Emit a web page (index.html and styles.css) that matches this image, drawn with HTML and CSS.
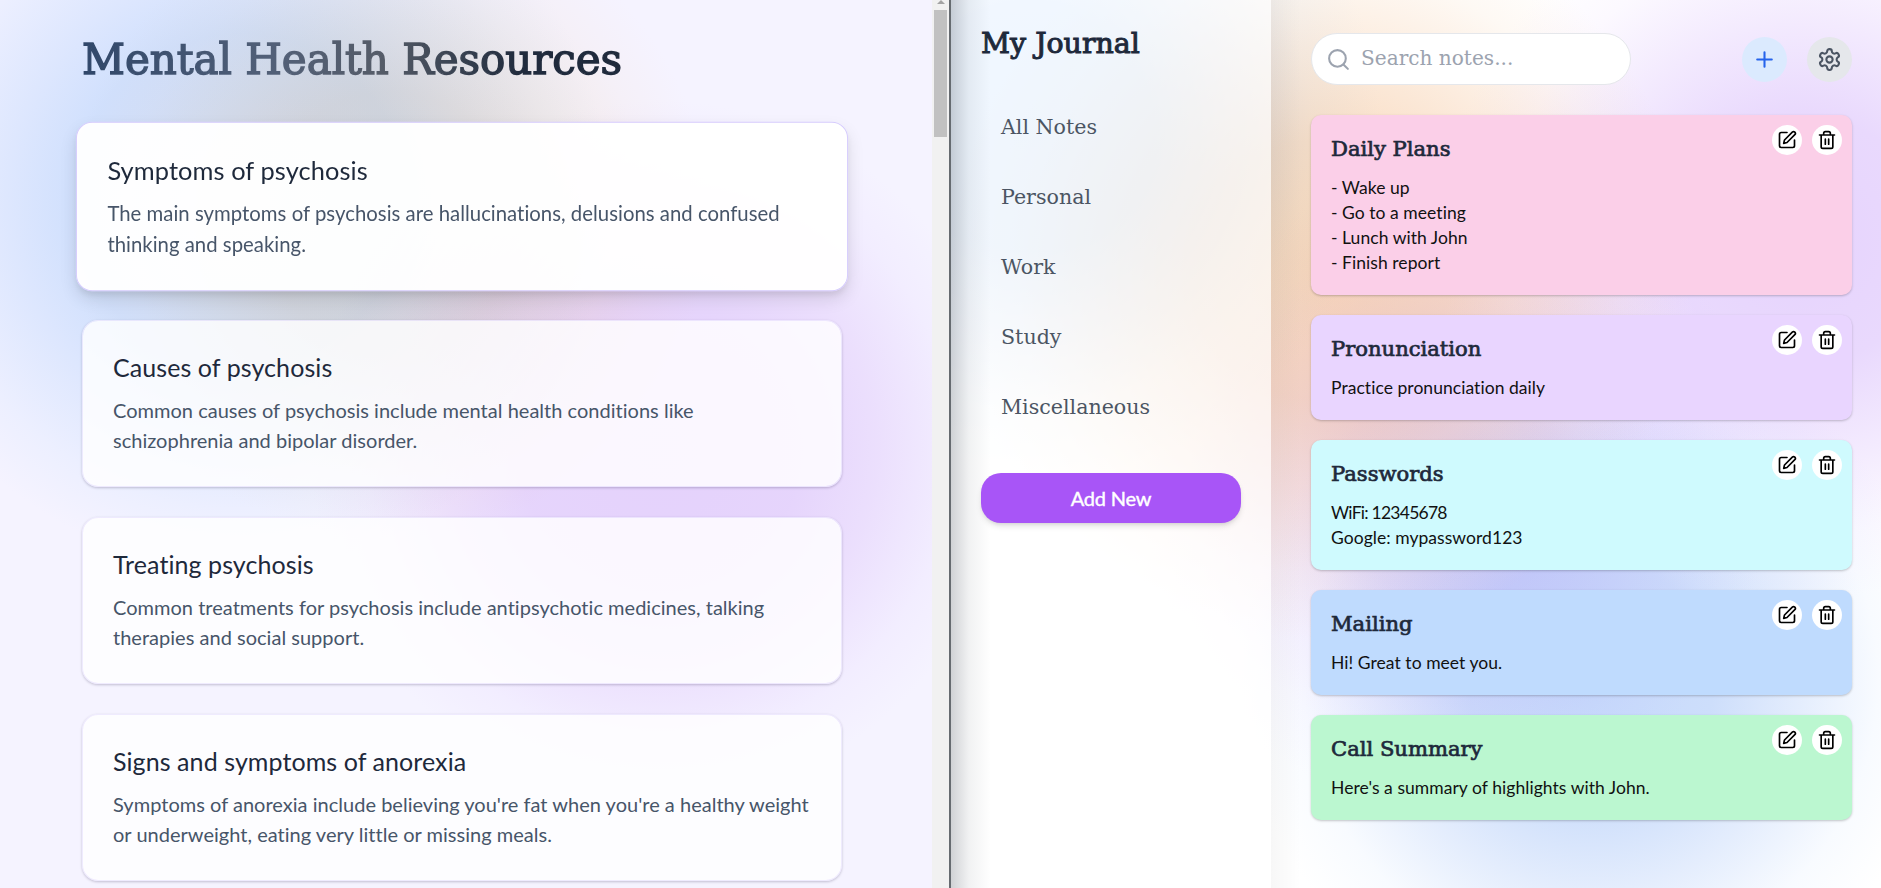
FILE: index.html
```html
<!DOCTYPE html>
<html lang="en">
<head>
<meta charset="utf-8">
<title>Mental Health Resources</title>
<link rel="stylesheet" href="styles.css">
</head>
<body>
<svg class="sprite" aria-hidden="true">
  <symbol id="edit" viewBox="0 0 24 24"><path d="M12 3H5a2 2 0 0 0-2 2v14a2 2 0 0 0 2 2h14a2 2 0 0 0 2-2v-7"/><path d="M18.375 2.625a2.12 2.12 0 0 1 3 3L12 15l-4 1 1-4z"/></symbol>
  <symbol id="trash" viewBox="0 0 24 24"><path d="M3 6h18M19 6v14a2 2 0 0 1-2 2H7a2 2 0 0 1-2-2V6M8 6V4a2 2 0 0 1 2-2h4a2 2 0 0 1 2 2v2M10 11v6M14 11v6"/></symbol>
  <symbol id="plus" viewBox="0 0 24 24"><path d="M5 12h14M12 5v14"/></symbol>
  <symbol id="search" viewBox="0 0 24 24"><circle cx="11" cy="11" r="8"/><path d="m21 21-4.3-4.3"/></symbol>
  <symbol id="gear" viewBox="0 0 24 24"><path d="M12.22 2h-.44a2 2 0 0 0-2 2v.18a2 2 0 0 1-1 1.73l-.43.25a2 2 0 0 1-2 0l-.15-.08a2 2 0 0 0-2.73.73l-.22.38a2 2 0 0 0 .73 2.73l.15.1a2 2 0 0 1 1 1.72v.51a2 2 0 0 1-1 1.74l-.15.09a2 2 0 0 0-.73 2.73l.22.38a2 2 0 0 0 2.73.73l.15-.08a2 2 0 0 1 2 0l.43.25a2 2 0 0 1 1 1.73V20a2 2 0 0 0 2 2h.44a2 2 0 0 0 2-2v-.18a2 2 0 0 1 1-1.73l.43-.25a2 2 0 0 1 2 0l.15.08a2 2 0 0 0 2.73-.73l.22-.39a2 2 0 0 0-.73-2.73l-.15-.08a2 2 0 0 1-1-1.74v-.5a2 2 0 0 1 1-1.74l.15-.09a2 2 0 0 0 .73-2.73l-.22-.38a2 2 0 0 0-2.73-.73l-.15.08a2 2 0 0 1-2 0l-.43-.25a2 2 0 0 1-1-1.73V4a2 2 0 0 0-2-2z"/><circle cx="12" cy="12" r="3"/></symbol>
</svg>
<div class="screen">
  <main class="resources">
    <h1 class="page-title">Mental Health Resources</h1>
    <article class="card active"><h2>Symptoms of psychosis</h2><p>The main symptoms of psychosis are hallucinations, delusions and confused<br>thinking and speaking.</p></article>
    <article class="card"><h2>Causes of psychosis</h2><p>Common causes of psychosis include mental health conditions like<br>schizophrenia and bipolar disorder.</p></article>
    <article class="card"><h2>Treating psychosis</h2><p>Common treatments for psychosis include antipsychotic medicines, talking<br>therapies and social support.</p></article>
    <article class="card"><h2>Signs and symptoms of anorexia</h2><p>Symptoms of anorexia include believing you're fat when you're a healthy weight<br>or underweight, eating very little or missing meals.</p></article>
  </main>
  <div class="scrollbar"><div class="arrow"></div><div class="thumb"></div></div>
  <section class="journal">
    <aside class="sidebar">
      <h2 class="brand">My Journal</h2>
      <nav class="nav"><a>All Notes</a><a>Personal</a><a>Work</a><a>Study</a><a>Miscellaneous</a></nav>
      <button class="add">Add New</button>
    </aside>
    <div class="content">
      <header class="toolbar">
        <div class="search"><svg class="icon"><use href="#search"/></svg><span>Search notes...</span></div>
        <div class="actions">
          <button class="round blue"><svg class="icon"><use href="#plus"/></svg></button>
          <button class="round gray"><svg class="icon"><use href="#gear"/></svg></button>
        </div>
      </header>
      <div class="notes">
        <article class="note pink"><h3>Daily Plans</h3><p>- Wake up<br>- Go to a meeting<br>- Lunch with John<br>- Finish report</p><div class="tools"><button><svg class="icon"><use href="#edit"/></svg></button><button><svg class="icon"><use href="#trash"/></svg></button></div></article>
        <article class="note purple"><h3>Pronunciation</h3><p>Practice pronunciation daily</p><div class="tools"><button><svg class="icon"><use href="#edit"/></svg></button><button><svg class="icon"><use href="#trash"/></svg></button></div></article>
        <article class="note cyan"><h3>Passwords</h3><p><span class="digits">WiFi: 12345678</span><br>Google: mypassword123</p><div class="tools"><button><svg class="icon"><use href="#edit"/></svg></button><button><svg class="icon"><use href="#trash"/></svg></button></div></article>
        <article class="note sky"><h3>Mailing</h3><p>Hi! Great to meet you.</p><div class="tools"><button><svg class="icon"><use href="#edit"/></svg></button><button><svg class="icon"><use href="#trash"/></svg></button></div></article>
        <article class="note green"><h3>Call Summary</h3><p>Here's a summary of highlights with John.</p><div class="tools"><button><svg class="icon"><use href="#edit"/></svg></button><button><svg class="icon"><use href="#trash"/></svg></button></div></article>
      </div>
    </div>
  </section>
</div>
</body>
</html>
```
FILE: styles.css
```css
* { box-sizing: border-box; margin: 0; padding: 0; }
body { font-family: Lato, "Open Sans", sans-serif; font-variant-ligatures: none; overflow: hidden; }
button { border: 0; font: inherit; }
.sprite { display: none; }
.icon { fill: none; stroke: currentColor; stroke-width: 2; stroke-linecap: round; stroke-linejoin: round; width: 25px; height: 25px; flex: none; }
.screen { display: flex; width: 1881px; height: 888px; overflow: hidden; }

.resources {
  width: 932px; height: 888px; overflow: hidden; padding: 30px 90px 0 82px;
  display: flex; flex-direction: column; gap: 30px;
  background-color: #f5f3ff;
  background-image:
    radial-gradient(circle 370px at 240px 200px, #deecfd 0%, #d9ebfd 45%, #e6f2fe 62%, #f6fbff 84%, #fff 100%),
    radial-gradient(circle 320px at 390px 220px, #fdf0dc 0%, #fcf0de 40%, #fdf6ea 60%, #fffcf8 82%, #fff 100%),
    radial-gradient(circle 350px at 660px 450px, #eedcfc 0%, #efdffc 40%, #f5eafd 62%, #fcf9ff 84%, #fff 100%);
  background-blend-mode: multiply;
}
.page-title {
  width: 600px; height: 63px; white-space: nowrap;
  font: 42px/60px "DejaVu Serif", serif; letter-spacing: -.05px;
  color: transparent; -webkit-text-stroke: 1.4px transparent; -webkit-background-clip: text; background-clip: text;
  background-image: linear-gradient(90deg, #30476a 0, #526078 190px, #555c68 300px, #202b3d 440px, #1e293b 100%);
}
.card {
  width: 760px; height: 167px; flex: none; padding: 29px 29px 30px 30px; border: 1px solid rgba(237, 233, 254, .8);
  border-radius: 16px; background: rgba(255, 255, 255, .82); background-clip: padding-box;
  box-shadow: 0 1px 3px rgba(30, 20, 60, .16), 0 1px 2px rgba(30, 20, 60, .08);
}
.card h2 { font-size: 25px; font-weight: 400; line-height: 35px; color: #1e293b; margin-bottom: 10px; white-space: nowrap; letter-spacing: .08px; }
.card p { font-size: 20px; line-height: 30px; color: #475569; white-space: nowrap; letter-spacing: .02px; }
.card.active { transform: scale(1.016); background: rgba(255, 255, 255, .96); border-color: #d6ccfd; box-shadow: 0 8px 18px -2px rgba(0, 0, 0, .12), 0 4px 8px -3px rgba(0, 0, 0, .1); }

.scrollbar { width: 19px; background: #f1f1f1; border-right: 2px solid #666b70; display: flex; flex-direction: column; align-items: center; }
.arrow { border: 4px solid transparent; border-top: 0; border-bottom: 4px solid #a3a3a3; margin-bottom: 6px; }
.thumb { width: 13px; height: 127px; background: #c1c1c1; }

.journal {
  width: 930px; display: flex; position: relative; background-color: #fff;
  background-image:
    radial-gradient(circle 350px at 80px 130px, #cbe2fd 0%, #cfe4fd 35%, #e4effe 58%, #f7fbff 80%, #fff 100%),
    radial-gradient(circle 370px at 370px 270px, #f8d8ba 0%, #f9dec6 35%, #fcecde 60%, #fef9f4 82%, #fff 100%),
    radial-gradient(circle 360px at 850px 240px, #e6d3fd 0%, #e9d9fd 35%, #f3eafe 60%, #fcf9ff 82%, #fff 100%),
    radial-gradient(circle 320px at 500px 490px, #eee0fd 0%, #f1e5fd 35%, #f8f1fe 60%, #fdfbff 82%, #fff 100%),
    radial-gradient(circle 350px at 640px 680px, #c6d9fb 0%, #cddefb 35%, #e4edfd 60%, #f8fbff 82%, #fff 100%);
  background-blend-mode: multiply;
}
.journal::before { content: ""; position: absolute; inset: 0 auto 0 0; width: 40px; background: linear-gradient(90deg, rgba(20, 30, 45, .2), rgba(20, 30, 45, .06) 45%, transparent); pointer-events: none; }
.sidebar { width: 320px; padding: 25px 30px; background: rgba(255, 255, 255, .7); }
.brand { font: 28.4px/38px "DejaVu Serif", serif; -webkit-text-stroke: 1px #1e293b; color: #1e293b; white-space: nowrap; }
.nav { display: flex; flex-direction: column; margin-top: 29px; padding-left: 20px; }
.nav a { font: 20.6px/70px "DejaVu Serif", serif; color: #4b5563; }
.add { display: block; position: relative; width: 260px; height: 50px; margin-top: 31px; padding-bottom: 1px; border-radius: 20px; background: #a855f7; color: #fff; font-size: 20px; letter-spacing: -.2px; -webkit-text-stroke: .4px #fff; box-shadow: 0 4px 6px -1px rgba(0, 0, 0, .12), 0 2px 4px -2px rgba(0, 0, 0, .12); }

.content { flex: 1; padding: 33px 29px 0 40px; background: linear-gradient(90deg, rgba(0, 0, 0, .03), transparent 30px); }
.toolbar { display: flex; justify-content: space-between; align-items: center; height: 52px; }
.search { display: flex; align-items: center; gap: 10px; width: 320px; height: 52px; padding-left: 14px; border: 1px solid #e5e7eb; border-radius: 26px; background: #fff; color: #9ca3af; font: 20.1px/28px "DejaVu Serif", serif; }
.search span { padding-bottom: 2px; }
.actions { display: flex; gap: 20px; margin-top: 1px; }
.round { width: 45px; height: 45px; border-radius: 50%; display: flex; align-items: center; justify-content: center; }
.blue { background: #dbeafe; color: #2563eb; }
.gray { background: #e5e7eb; color: #4b5563; }
.notes { display: flex; flex-direction: column; gap: 20px; margin-top: 30px; }
.note { position: relative; padding: 20px; border-radius: 10px; box-shadow: 0 1px 3px rgba(0, 0, 0, .13), 0 1px 2px rgba(0, 0, 0, .1); }
.note h3 { font: 21.1px/28px "DejaVu Serif", serif; -webkit-text-stroke: .7px #1e293b; color: #1e293b; margin-bottom: 12px; }
.note p { font-size: 17.5px; line-height: 25px; color: #111; letter-spacing: .05px; }
.note .digits { letter-spacing: -.75px; }
.tools { position: absolute; top: 10px; right: 10px; display: flex; gap: 10px; }
.tools button { width: 30px; height: 30px; border-radius: 50%; background: #fff; color: #000; display: flex; align-items: center; justify-content: center; }
.tools .icon { width: 20px; height: 20px; }
.pink { background: #fbcfe8; }
.purple { background: #e9d5ff; }
.cyan { background: #cffafe; }
.sky { background: #bfdbfe; }
.green { background: #bbf7d0; }
```
